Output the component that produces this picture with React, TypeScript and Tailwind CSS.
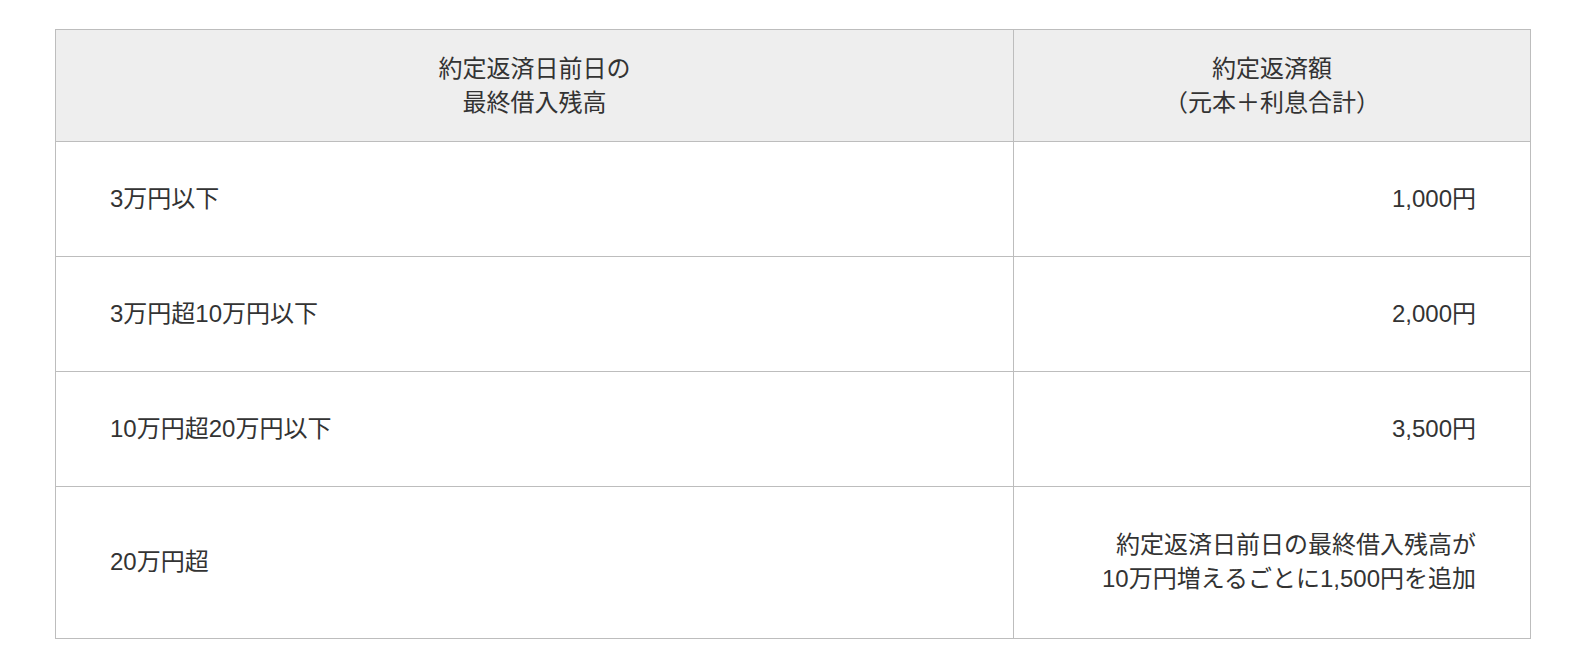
const rows: { balance: string; amount: string[] }[] = [
  { balance: "3万円以下", amount: ["1,000円"] },
  { balance: "3万円超10万円以下", amount: ["2,000円"] },
  { balance: "10万円超20万円以下", amount: ["3,500円"] },
  {
    balance: "20万円超",
    amount: ["約定返済日前日の最終借入残高が", "10万円増えるごとに1,500円を追加"],
  },
];

export default function App() {
  return (
    <div className="min-h-screen bg-white pt-[29px] pl-[55px] pr-[40px] text-[#333] font-['Liberation_Sans','Noto_Sans_CJK_JP',sans-serif] text-[24px] leading-[34px]">
      <table className="w-[1476px] border-collapse table-fixed">
        <colgroup>
          <col className="w-[958px]" />
          <col />
        </colgroup>
        <thead>
          <tr className="bg-[#eeeeee]">
            <th className="border border-[#bdbdbd] pt-[22px] pb-[21px] text-center font-normal">
              約定返済日前日の
              <br />
              最終借入残高
            </th>
            <th className="border border-[#bdbdbd] pt-[22px] pb-[21px] text-center font-normal">
              約定返済額
              <br />
              （元本＋利息合計）
            </th>
          </tr>
        </thead>
        <tbody>
          {rows.map((r, i) => {
            const last = i === rows.length - 1;
            return (
              <tr key={i}>
                <td
                  className={`border border-[#bdbdbd] px-[54px] text-left align-middle ${
                    last ? "pt-[41px] pb-[42px]" : "py-[40px]"
                  }`}
                >
                  {r.balance}
                </td>
                <td
                  className={`border border-[#bdbdbd] pl-[57px] pr-[54px] text-right align-middle ${
                    last ? "pt-[41px] pb-[42px]" : "py-[40px]"
                  }`}
                >
                  {r.amount.map((line, j) => (
                    <div key={j}>{line}</div>
                  ))}
                </td>
              </tr>
            );
          })}
        </tbody>
      </table>
    </div>
  );
}
